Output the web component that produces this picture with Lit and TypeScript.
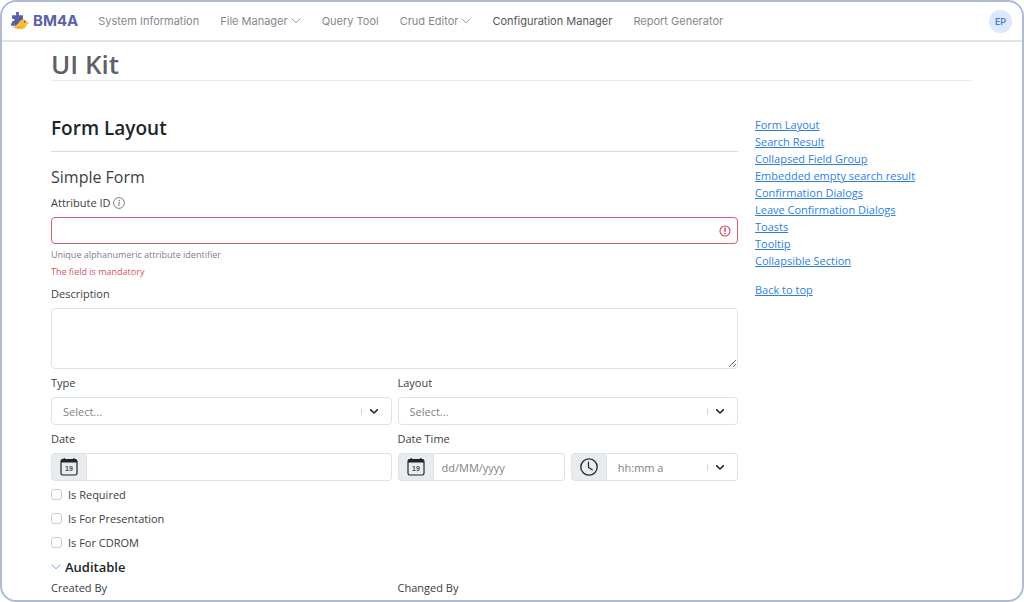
import { LitElement, html, css, nothing } from "lit";
import { customElement, property } from "lit/decorators.js";

const caret = html`<svg class="caret" viewBox="0 0 20 20" aria-hidden="true">
  <path fill="currentColor" d="M4.5 7.6c.4-.5 1.1-.5 1.6 0L10 11.3l3.9-3.7c.5-.5 1.2-.5 1.6 0 .4.4.4 1.2 0 1.6l-4.7 4.5c-.4.4-1.2.4-1.6 0L4.5 9.2c-.4-.4-.4-1.2 0-1.6z"/>
</svg>`;

const chevron = html`<svg class="chevron" viewBox="0 0 16 16" aria-hidden="true">
  <path d="M1.6 4.6 8 11l6.4-6.4" fill="none" stroke="currentColor" stroke-width="1.4" stroke-linecap="round" stroke-linejoin="round"/>
</svg>`;

const calendar = html`<svg class="addon-icon" viewBox="0 0 18 18" aria-hidden="true">
  <path d="M4.2 0v2M13.8 0v2" stroke="currentColor" stroke-width="1.2"/>
  <rect x="1" y="1.6" width="16" height="15.4" rx="1.8" fill="none" stroke="currentColor" stroke-width="1.2"/>
  <path d="M1 4.6V3.2C1 2.2 1.8 1.2 2.8 1.2h12.4c1 0 1.8 1 1.8 2v1.4z" fill="currentColor"/>
  <text x="9" y="12.8" text-anchor="middle" font-family="Liberation Sans, sans-serif" font-weight="700" font-size="7" fill="#4a4e52">19</text>
</svg>`;

const clock = html`<svg class="addon-icon" viewBox="0 0 18 18" aria-hidden="true">
  <circle cx="9" cy="9" r="8.2" fill="none" stroke="currentColor" stroke-width="1.3"/>
  <path d="M8.5 4v5.6l3.8 2.2" fill="none" stroke="currentColor" stroke-width="1.2" stroke-linecap="round" stroke-linejoin="round"/>
</svg>`;

const shared = css`
  *, *::before, *::after { box-sizing: border-box; }
  .control {
    width: 100%;
    height: 28px;
    margin: 0;
    padding: 0 12px;
    border: 1px solid #dee2e6;
    border-radius: 4px;
    background: #fff;
    color: #808488;
    font: inherit;
    outline: none;
  }
  .control::placeholder { color: #808488; opacity: 1; }
  .control:focus { border-color: #86b7fe; }
  .label { display: block; margin-bottom: 6px; }
  .caret { width: 14px; height: 14px; color: #212529; }
`;

@customElement("nav-bar")
class NavBar extends LitElement {
  static styles = [shared, css`
    :host { display: block; }
    .bar {
      display: flex;
      align-items: center;
      height: 40px;
      padding: 0 10px 0 8px;
      border-bottom: 2px solid #e0e2e6;
      font: 11px/18px Inter, sans-serif;
    }
    .brand {
      display: flex;
      align-items: center;
      gap: 4px;
      color: #5b5fa5;
      text-decoration: none;
      font: 700 15px/18px Inter, sans-serif;
    }
    .logo { width: 19px; height: 18px; }
    .menu { display: flex; gap: 21px; margin-left: 20px; }
    .item {
      display: flex;
      align-items: center;
      gap: 3px;
      color: #85888c;
      text-decoration: none;
      white-space: nowrap;
    }
    .item.active { color: #55585c; }
    .chevron { width: 10px; height: 10px; }
    .avatar {
      width: 23px;
      height: 23px;
      margin-left: auto;
      padding: 0;
      border: 0;
      border-radius: 50%;
      background: #dbe8fd;
      color: #3c6cc4;
      font: 500 9px/23px Inter, sans-serif;
    }
  `];

  items = [
    { text: "System Information" },
    { text: "File Manager", menu: true },
    { text: "Query Tool" },
    { text: "Crud Editor", menu: true },
    { text: "Configuration Manager", active: true },
    { text: "Report Generator" },
  ];

  render() {
    return html`<header class="bar">
      <a class="brand" href="#">
        <svg class="logo" viewBox="0 0 19 18" aria-hidden="true">
          <path fill="#5b5fa5" d="M2 3.2h4.2V1.8a1.5 1.5 0 1 1 2.6 0v1.4H13v9H2V9.6L4.4 8.6V7.2L2 6.6z"/>
          <path fill="#5b5fa5" d="M1 11.2h6v2.5H1z"/>
          <path fill="#f7bd35" d="M2.3 14.6c3.3.3 5-1.2 6.4-3.8C9.8 8.6 11.4 7.4 13.5 7.4c2 0 3.2 1.2 3.5 2.9l1.5.6-1.5 1c-.4 3-2.8 5.300-6.600 5.300-3.300 0-6.300-.8-8.100-2.600z"/>
          <path fill="#e8982a" d="M2.3 14.6c3.700 1.200 7.700.7 10.700-1.400-1.600 3-4.900 3.700-10.700 1.400zM17 10.300l1.500.6-1.500 1z"/>
          <circle cx="14.6" cy="9.8" r=".8" fill="#4a3b25"/>
        </svg>
        <span>BM4A</span>
      </a>
      <nav class="menu">
        ${this.items.map((i) => html`<a class="item ${i.active ? "active" : ""}" href="#">${i.text}${i.menu ? chevron : nothing}</a>`)}
      </nav>
      <button class="avatar" type="button" aria-label="Account EP">EP</button>
    </header>`;
  }
}

@customElement("select-field")
class SelectField extends LitElement {
  @property() label = "";
  @property() placeholder = "Select...";
  @property({ type: Boolean }) joined = false;

  static styles = [shared, css`
    :host { display: block; flex: 1; min-width: 0; }
    .box { display: grid; grid-template-columns: minmax(0, 1fr) auto; align-items: center; }
    .control { grid-area: 1 / 1 / 2 / 3; appearance: none; padding: 0 44px 0 11px; }
    .joined { border-radius: 0 4px 4px 0; border-left: 0; }
    .side {
      grid-area: 1 / 2 / 2 / 3;
      display: flex;
      align-items: center;
      gap: 5px;
      padding-right: 11px;
      pointer-events: none;
    }
    .side::before { content: ""; width: 1px; height: 7px; background: #d4d4d4; }
  `];

  render() {
    return html`
      ${this.joined ? nothing : html`<label class="label" for="s">${this.label}</label>`}
      <div class="box">
        <select id="s" class="control ${this.joined ? "joined" : ""}" aria-label=${this.label}>
          <option>${this.placeholder}</option>
        </select>
        <span class="side">${caret}</span>
      </div>`;
  }
}

@customElement("app-root")
class AppRoot extends LitElement {
  static styles = [shared, css`
    :host { display: block; background: #fff; }
    .frame {
      height: 100vh;
      overflow: hidden;
      border: 2px solid #b0bbd3;
      border-radius: 16px;
      background: #fff;
      color: #3a3e42;
      font: 11px/17px "Open Sans", "Noto Sans", sans-serif;
    }
    .page { padding: 6px 50px 0 49px; }
    h1, h2, h3, p { margin: 0; }
    .title {
      border-bottom: 1px solid #e9ebed;
      color: #5f6265;
      font-size: 26px;
      font-weight: 600;
      line-height: 32px;
    }
    .columns {
      display: grid;
      grid-template-columns: minmax(0, 1fr) 217px;
      gap: 17px;
      padding-top: 35px;
    }
    .section {
      padding-bottom: 11px;
      border-bottom: 1px solid #d9dcdf;
      color: #212529;
      font-size: 19px;
      font-weight: 600;
      line-height: 24px;
    }
    .subtitle { margin-top: 14px; font-size: 16px; font-weight: 400; line-height: 22px; }
    .form { display: grid; gap: 5px; margin-top: 6px; }
    .row { display: grid; grid-template-columns: 1fr 1fr; gap: 6px; }
    .label-line { display: flex; align-items: center; gap: 2px; margin-bottom: 6px; }
    .info { width: 12px; height: 12px; color: #6c7074; }
    .checked { display: grid; align-items: center; }
    .checked .control, .checked .alert { grid-area: 1 / 1; }
    .control.invalid { height: 27px; border-color: #d4606c; padding-right: 30px; }
    .alert { width: 12px; height: 12px; margin-right: 7px; justify-self: end; color: #d04452; }
    .notes { padding-top: 2px; font-size: 9px; }
    .hint { color: #7b8086; }
    .error { color: #d8505d; }
    .area { display: block; height: 61px; resize: vertical; }
    .group { display: flex; min-width: 0; }
    .addon {
      display: grid;
      place-items: center;
      flex: none;
      width: 36px;
      height: 28px;
      padding: 0;
      border: 1px solid #dee2e6;
      border-radius: 4px 0 0 4px;
      background: #e9ecef;
      color: #212529;
    }
    .addon-icon { width: 18px; height: 18px; }
    .group .control { flex: 1; min-width: 0; padding: 0 8px; border-left: 0; border-radius: 0 4px 4px 0; }
    .checks { display: grid; margin-top: -4px; }
    .check { display: flex; align-items: center; gap: 6px; height: 24px; }
    .tick {
      appearance: none;
      width: 11px;
      height: 11px;
      margin: 0;
      border: 1px solid #c9cdd1;
      border-radius: 3px;
      background: #fff;
    }
    .tick:checked { background: #0d6efd; border-color: #0d6efd; }
    .fold { font: inherit; margin-top: -2px; }
    .toggle {
      display: flex;
      align-items: center;
      gap: 4px;
      padding: 0;
      border: 0;
      background: none;
      color: #212529;
      font: inherit;
      font-size: 13px;
      font-weight: 600;
      line-height: 20px;
    }
    .toggle .chevron { width: 10px; height: 10px; color: #5b97ea; }
    .audit { margin-top: -3px; }
    .links { display: flex; flex-direction: column; align-items: flex-start; }
    .link { color: #2f7fe0; text-decoration: underline; }
    .top { margin-top: 12px; }
  `];

  links = [
    "Form Layout", "Search Result", "Collapsed Field Group", "Embedded empty search result",
    "Confirmation Dialogs", "Leave Confirmation Dialogs", "Toasts", "Tooltip", "Collapsible Section",
  ];

  render() {
    return html`<div class="frame">
      <nav-bar></nav-bar>
      <main class="page">
        <h1 class="title">UI Kit</h1>
        <div class="columns">
          <section>
            <h2 class="section">Form Layout</h2>
            <h3 class="subtitle">Simple Form</h3>
            <form class="form">
              <div>
                <div class="label-line">
                  <label for="attr">Attribute ID</label>
                  <svg class="info" viewBox="0 0 12 12" aria-hidden="true">
                    <circle cx="6" cy="6" r="5.4" fill="none" stroke="currentColor" stroke-width=".9"/>
                    <path d="M5.3 5h1L5.7 8.4c0 .5.3.5.8.3" fill="none" stroke="currentColor" stroke-width=".9"/>
                    <circle cx="6.3" cy="3.4" r=".7" fill="currentColor"/>
                  </svg>
                </div>
                <div class="checked">
                  <input id="attr" class="control invalid" type="text" aria-invalid="true" aria-describedby="notes">
                  <svg class="alert" viewBox="0 0 12 12" aria-hidden="true">
                    <circle cx="6" cy="6" r="5" fill="none" stroke="currentColor" stroke-width="1.1"/>
                    <path d="M6 3v3.4" stroke="currentColor" stroke-width="1.4" stroke-linecap="round"/>
                    <circle cx="6" cy="8.6" r=".8" fill="currentColor"/>
                  </svg>
                </div>
                <div id="notes" class="notes">
                  <p class="hint">Unique alphanumeric attribute identifier</p>
                  <p class="error">The field is mandatory</p>
                </div>
              </div>
              <div>
                <label class="label" for="desc">Description</label>
                <textarea id="desc" class="control area"></textarea>
              </div>
              <div class="row">
                <select-field label="Type"></select-field>
                <select-field label="Layout"></select-field>
              </div>
              <div class="row">
                <div>
                  <label class="label" for="date">Date</label>
                  <div class="group">
                    <button class="addon" type="button" aria-label="Pick date">${calendar}</button>
                    <input id="date" class="control" type="text">
                  </div>
                </div>
                <div>
                  <label class="label" for="datetime">Date Time</label>
                  <div class="row">
                    <div class="group">
                      <button class="addon" type="button" aria-label="Pick date">${calendar}</button>
                      <input id="datetime" class="control" type="text" placeholder="dd/MM/yyyy">
                    </div>
                    <div class="group">
                      <button class="addon" type="button" aria-label="Pick time">${clock}</button>
                      <select-field joined label="Time" placeholder="hh:mm a"></select-field>
                    </div>
                  </div>
                </div>
              </div>
              <div class="checks">
                ${["Is Required", "Is For Presentation", "Is For CDROM"].map((t) => html`
                  <label class="check"><input class="tick" type="checkbox">${t}</label>`)}
              </div>
              <h3 class="fold"><button class="toggle" type="button" aria-expanded="true">${chevron}Auditable</button></h3>
              <div class="row audit">
                <div><label class="label" for="created">Created By</label><input id="created" class="control" type="text"></div>
                <div><label class="label" for="changed">Changed By</label><input id="changed" class="control" type="text"></div>
              </div>
            </form>
          </section>
          <nav class="links" aria-label="On this page">
            ${this.links.map((t) => html`<a class="link" href="#">${t}</a>`)}
            <a class="link top" href="#">Back to top</a>
          </nav>
        </div>
      </main>
    </div>`;
  }
}
